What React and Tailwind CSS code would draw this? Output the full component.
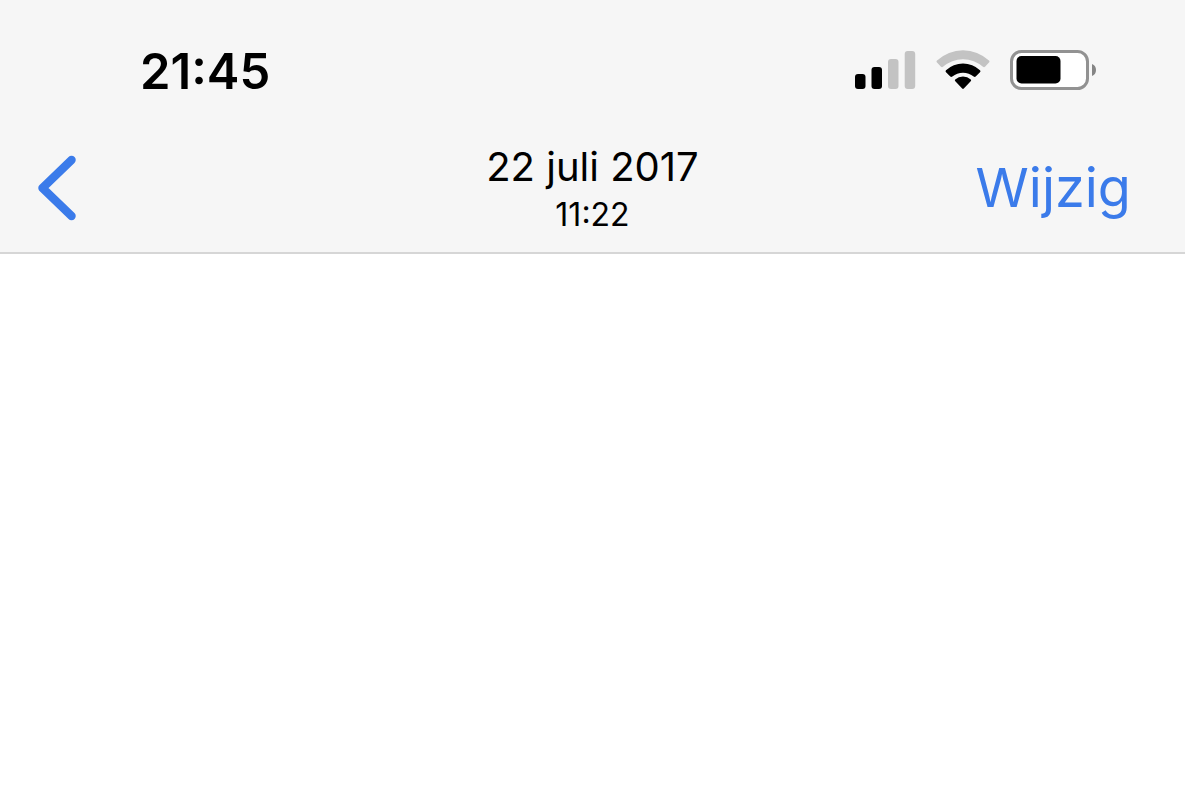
function SignalIcon() {
  return (
    <svg width="61" height="38" viewBox="0 0 61 38" role="img" aria-label="Signal">
      <rect x="0" y="23" width="10.5" height="15" rx="3" fill="#000" />
      <rect x="16.5" y="16" width="10.5" height="22" rx="3" fill="#000" />
      <rect x="33" y="8" width="10.5" height="30" rx="3" fill="#c3c3c3" />
      <rect x="49.7" y="0" width="10.5" height="38" rx="3" fill="#c3c3c3" />
    </svg>
  );
}

function WifiIcon() {
  return (
    <svg width="54" height="40" viewBox="0 0 54 40" role="img" aria-label="Wi-Fi">
      <path d="M1 10.500 Q0 11.500 1 12.500 L5 16.800 Q6 17.600 7 16.800 A30 30 0 0 1 47 16.800 Q48 17.600 49 16.800 L53 12.500 Q54 11.500 53 10.500 A38 38 0 0 0 1 10.500 Z" fill="#c3c3c3" />
      <path d="M10 20.200 Q9 21.200 10 22.200 L14.300 26.500 Q15.300 27.300 16.300 26.500 A17 17 0 0 1 37.700 26.500 Q38.700 27.300 39.700 26.500 L44 22.200 Q45 21.200 44 20.200 A25 25 0 0 0 10 20.200 Z" fill="#000" />
      <path d="M19.200 29.600 Q18.400 30.500 19.300 31.300 L26.200 38.500 Q27 39.300 27.800 38.500 L34.700 31.300 Q35.600 30.500 34.800 29.600 A11.500 11.500 0 0 0 19.200 29.600 Z" fill="#000" />
    </svg>
  );
}

function BatteryIcon() {
  return (
    <svg width="87" height="40" viewBox="0 0 87 40" role="img" aria-label="Battery">
      <rect x="1.500" y="1.500" width="76" height="37" rx="10" fill="#fff" stroke="#929292" strokeWidth="3" />
      <rect x="6.500" y="6" width="44" height="27.500" rx="5" fill="#000" />
      <path d="M82 14 A6.500 6.500 0 0 1 82 26 Z" fill="#858585" />
    </svg>
  );
}

export default function App() {
  return (
    <div className="min-h-screen bg-white font-['Inter',sans-serif] text-black">
      <header className="border-b-2 border-[#d6d6d6] bg-[#f6f6f6]">
        <div className="flex items-start justify-between pt-[42px] pr-[88px] pl-[140px]">
          <time className="text-[49px] leading-[60px] font-semibold">21:45</time>
          <div className="flex items-center gap-5 pt-2">
            <SignalIcon />
            <WifiIcon />
            <BatteryIcon />
          </div>
        </div>
        <nav className="grid grid-cols-[1fr_auto_1fr] items-center px-9 pt-[35px] pb-[13px]">
          <button type="button" aria-label="Terug" className="justify-self-start">
            <svg width="42" height="68" viewBox="0 0 42 68" fill="none" stroke="#3b7bea" strokeWidth="8.500" strokeLinecap="round" strokeLinejoin="round">
              <path d="M35.500 6 L6.500 34 L35.500 62" />
            </svg>
          </button>
          <div className="flex flex-col items-center pt-[6px]">
            <h1 className="text-[40px] leading-[48px]">22 juli 2017</h1>
            <time className="text-[32px] leading-[48px]">11:22</time>
          </div>
          <button type="button" className="justify-self-end pr-[18px] text-[54px] leading-[68px] text-[#3b7bea]">
            Wijzig
          </button>
        </nav>
      </header>
      <main />
    </div>
  );
}
